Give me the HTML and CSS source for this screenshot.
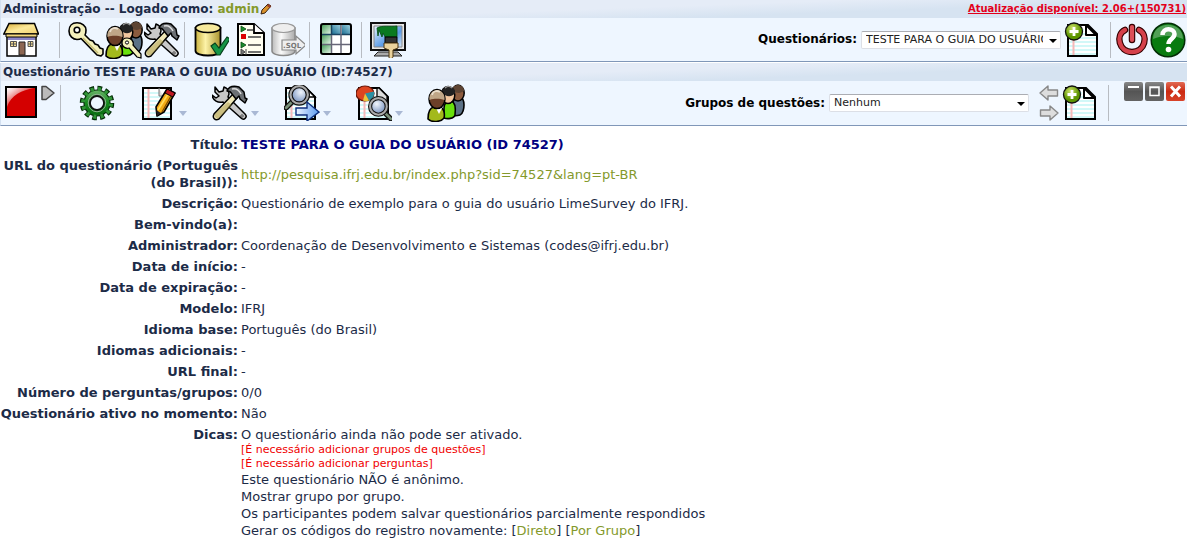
FILE: index.html
```
<!DOCTYPE html>
<html lang="pt-BR">
<head>
    <meta charset="UTF-8">
    <title>Administração - TESTE PARA O GUIA DO USUÁRIO</title>
    <link rel="stylesheet" href="styles.css">
</head>
<body>
    <svg class="sprite" width="0" height="0" aria-hidden="true">
        <defs>
            <linearGradient id="gold" x1="0" x2="1">
                <stop offset="0" stop-color="#c9b13c"/><stop offset=".4" stop-color="#fdf3a8"/><stop offset="1" stop-color="#a8922c"/>
            </linearGradient>
            <linearGradient id="silver" x1="0" x2="1">
                <stop offset="0" stop-color="#bbb"/><stop offset=".4" stop-color="#fafafa"/><stop offset="1" stop-color="#aaa"/>
            </linearGradient>
            <linearGradient id="roof" x1="0" x2="1" y1="0" y2="1">
                <stop offset="0" stop-color="#d8ac38"/><stop offset=".5" stop-color="#fbe99a"/><stop offset="1" stop-color="#f0cf6c"/>
            </linearGradient>
            <linearGradient id="red" x1="0" x2=".7" y1="0" y2=".7">
                <stop offset="0" stop-color="#fff"/><stop offset=".25" stop-color="#f6d0d0"/><stop offset="1" stop-color="#d40000"/>
            </linearGradient>
            <linearGradient id="green" x1="0" x2="0" y1="0" y2="1">
                <stop offset="0" stop-color="#6cb56c"/><stop offset=".5" stop-color="#158a1c"/><stop offset="1" stop-color="#0a6a12"/>
            </linearGradient>
            <linearGradient id="screen" x1="0" x2="1" y1="0" y2="1">
                <stop offset="0" stop-color="#e8f2fd"/><stop offset=".6" stop-color="#5a9be6"/><stop offset="1" stop-color="#d8e8fa"/>
            </linearGradient>
            <linearGradient id="cellTop" x1="0" x2="1" y1="1" y2="0">
                <stop offset="0" stop-color="#1c6f94"/><stop offset="1" stop-color="#9dd0de"/>
            </linearGradient>
            <linearGradient id="cellLeft" x1="0" x2="1" y1="0" y2="1">
                <stop offset="0" stop-color="#4ba05c"/><stop offset="1" stop-color="#e4f3e7"/>
            </linearGradient>
            <linearGradient id="grey" x1="0" x2="0" y1="0" y2="1">
                <stop offset="0" stop-color="#888"/><stop offset=".5" stop-color="#555"/><stop offset="1" stop-color="#636363"/>
            </linearGradient>
            <linearGradient id="closeRed" x1="0" x2="0" y1="0" y2="1">
                <stop offset="0" stop-color="#e26a54"/><stop offset=".5" stop-color="#cb2a12"/><stop offset="1" stop-color="#d8432a"/>
            </linearGradient>
            <linearGradient id="blue" x1="0" x2="1">
                <stop offset="0" stop-color="#eef5ff"/><stop offset="1" stop-color="#5b9bf0"/>
            </linearGradient>
            <radialGradient id="lens" cx=".4" cy=".35">
                <stop offset="0" stop-color="#f2f6fc"/><stop offset="1" stop-color="#8ea5cb"/>
            </radialGradient>
            <radialGradient id="plus" cx=".4" cy=".3">
                <stop offset="0" stop-color="#cfe36a"/><stop offset="1" stop-color="#5c9400"/>
            </radialGradient>
        </defs>

        <symbol id="i-home" viewBox="0 0 36 36">
            <path d="M4 14h29v20H4z" fill="#fff" stroke="#000" stroke-width="1.5"/>
            <path d="M5 14h27v4H5z" fill="#8a84c8"/>
            <path d="M6 1.5h25.500L35.500 12H.8z" fill="url(#roof)" stroke="#000" stroke-width="1.500"/>
            <path d="M3 12h31v3H3z" fill="#f3d67c" stroke="#000"/>
            <path d="M16 20h6v13h-6z" fill="#8c6652" stroke="#222"/>
            <path d="M7.500 19.500h6v5h-6zM25 19.500h5v5h-5z" fill="#f3dc92" stroke="#555"/>
            <path d="M10.500 19v6M7.500 22h6M27.500 19v6M25 22h5" stroke="#555"/>
        </symbol>

        <symbol id="i-key" viewBox="0 0 36 36">
            <path d="M9 .8C4 .8 1 4 1 9s4 8.500 8 8.500c2 0 3 0 4-1L29 33l4 1 2-2v-5l-3-1-2-3-3-1-2-3-3-1-5-5c1-2 1-3 1-5C18 4 14 .8 9 .8z" fill="#f4f0bb" stroke="#000" stroke-width="1.600" stroke-linejoin="round"/>
            <circle cx="9" cy="8" r="2.800" fill="#fff" stroke="#000" stroke-width="1.600"/>
            <path d="M15 16l15 15" stroke="#c5bc72" stroke-width="1.500"/>
        </symbol>

        <symbol id="i-users" viewBox="0 0 38 38">
            <path d="M25 22c0-7 5-9 8-9 3 1 4 5 4 8s-1 9-4 10c-3 1-7 1-8 0z" fill="#5b7186" stroke="#000" stroke-width="1.600"/>
            <ellipse cx="31" cy="9" rx="6.200" ry="8" fill="#8b5b3e" stroke="#000" stroke-width="1.500"/>
            <path d="M25 7c0-8 12-8 12 0-3 2-6 3-12 0z" fill="#5d4433"/>
            <path d="M17 24c0-5 4-8 7-7 4 1 5 6 4 14-1 4-8 4-11 3z" fill="#69e00c" stroke="#000" stroke-width="1.600"/>
            <ellipse cx="21" cy="11" rx="6.800" ry="8.500" fill="#f3c79f" stroke="#000" stroke-width="1.500"/>
            <path d="M14 12C13 0 29 0 28 9c-3 4-7 4-10 2-1 1-2 2-4 1z" fill="#222"/>
            <path d="M18 4c2-2 5-2 7 0" stroke="#999" stroke-width="1.500" fill="none"/>
            <path d="M1 35c0-6 1-11 6-12h6c4 1 5 7 4 11-3 4-12 5-16 1z" fill="#a3b91c" stroke="#000" stroke-width="1.600"/>
            <path d="M9 24l3 6 3-6z" fill="#fff"/>
            <ellipse cx="10" cy="15" rx="8" ry="9.500" fill="#6c3f28" stroke="#000" stroke-width="1.500"/>
            <path d="M2.500 16C1 3 19 3 17.500 16c-4-1-9-2-15 0z" fill="#bfa687"/>
            <path d="M5 11c1-4 5-5 8-3" stroke="#eadfce" stroke-width="1.800" fill="none"/>
        </symbol>

        <symbol id="i-users-key" viewBox="0 0 38 38">
            <use href="#i-users" width="38" height="38"/>
            <path d="M22 17c-4 0-5 3-5 5 0 4 4 6 7 5l8 9 4 1v-4l-8-9c1-4-2-7-6-7z" fill="#f4f0bb" stroke="#000" stroke-width="1.200"/>
            <circle cx="22" cy="21.500" r="1.600" fill="#fff" stroke="#000"/>
        </symbol>

        <symbol id="i-tools" viewBox="0 0 36 36">
            <path d="M3 2l4 5 4-1 1-4c3 1 5 3 5 7l-1 3 17 17c3 3-1 7-4 4L11 17c-5 1-10-1-11-7l4 3 3-2-4-4z" fill="#c8c8c8" stroke="#000" stroke-width="1.500" stroke-linejoin="round"/>
            <path d="M21 9l4 4L7 34c-4 2-7-1-5-5z" fill="#f0e8b8" stroke="#000" stroke-width="1.500"/>
            <path d="M16 17l4 3L7 33c-3 1-5-1-4-4z" fill="#9e8e3f" opacity=".45"/>
            <path d="M15 6c2-5 8-5 12-4l5 5 1 6 2 1-2 4-5-4-1-3-3 3-4-5c-1-2-3-3-5-3z" fill="#6c7074" stroke="#000" stroke-width="1.500" stroke-linejoin="round"/>
            <path d="M20 4c4-1 7 1 9 5" stroke="#ddd" stroke-width="1.500" fill="none"/>
            <circle cx="30" cy="31" r="1.200" fill="#fff" stroke="#000" stroke-width=".7"/>
        </symbol>

        <symbol id="i-database" viewBox="-1 0 36 36">
            <path d="M1.500 6v23c0 6 25 6 25 0V6z" fill="url(#gold)" stroke="#000" stroke-width="1.800"/>
            <ellipse cx="14" cy="6" rx="12.500" ry="4.500" fill="#f6e99b" stroke="#000" stroke-width="1.500"/>
            <path d="M17 24l4-3 4 5 8-11 3 2-10 16h-3z" fill="#159545" stroke="#06401b" stroke-width="1.200"/>
        </symbol>

        <symbol id="i-list" viewBox="-2 0 36 36">
            <path d="M5 2h16l10 9v22H5z" fill="#fffef0" stroke="#000" stroke-width="2"/>
            <path d="M21 2v9h10" fill="#fff" stroke="#000" stroke-width="1.800"/>
            <path d="M8 4l5 3-5 3zM8 20l5 3-5 3z" fill="#1a8a2a" stroke="#064a10" stroke-width=".8"/>
            <path d="M8 12h5v5H8z" fill="#d00"/>
            <path d="M8 27l4 3-4 3zM13 27v6" fill="#777" stroke="#444"/>
            <path d="M14 8h6M15 15h13M15 23h13M15 30h13" stroke="#444" stroke-width="1.500"/>
        </symbol>

        <symbol id="i-sql" viewBox="-1 0 36 36">
            <path d="M2 6v23c0 6 23 6 23 0V6z" fill="url(#silver)" stroke="#888" stroke-width="1.500"/>
            <ellipse cx="13.500" cy="6" rx="11.500" ry="4.500" fill="#eee" stroke="#999" stroke-width="1.200"/>
            <path d="M12 18h14v-4l10 9-10 9v-4H12z" fill="#eee" stroke="#888" stroke-width="1.200"/>
            <text x="13" y="26" class="sql-text">.SQL</text>
        </symbol>

        <symbol id="i-grid" viewBox="0 0 36 36">
            <rect x="3" y="2" width="30" height="30" rx="2" fill="#fff"/>
            <path d="M14 3h9v9h-9z" fill="url(#cellTop)"/>
            <path d="M24 3h8v9h-8z" fill="url(#cellTop)"/>
            <path d="M4 3h9v9H4z" fill="url(#cellLeft)"/>
            <path d="M4 13h9v9H4z" fill="url(#cellLeft)"/>
            <path d="M4 23h9v8H4z" fill="url(#cellLeft)"/>
            <path d="M4 12.500h28M13.500 3v9" stroke="#1a4460" stroke-width="1.500"/>
            <path d="M13.500 13v18M23 3v28M4 22.500h28" stroke="#667" stroke-width="1.500"/>
            <rect x="3" y="2" width="30" height="30" rx="2" fill="none" stroke="#000" stroke-width="2"/>
        </symbol>

        <symbol id="i-monitor" viewBox="0 0 36 36">
            <rect x="1" y="1" width="34" height="27" fill="#e8e8e8" stroke="#111" stroke-width="2"/>
            <path d="M4 4h28v21H4z" fill="url(#screen)" stroke="#888"/>
            <path d="M8 30l-4 4h28l-4-4z" fill="#aaa" stroke="#222"/>
            <path d="M7 6c5-3 13-1 20-2v11H15l-2-4-1 4-3-7-1 6z" fill="#0a7a20" stroke="#034a10" stroke-width=".8"/>
            <path d="M15 15h12v6H15z" fill="#333" stroke="#000"/>
            <path d="M14 21h14v5l-5 2v7c-1 2-4 2-4 0v-7l-5-2z" fill="#ead29c" stroke="#4a3510"/>
        </symbol>

        <symbol id="i-sheet" viewBox="0 0 36 36">
            <path d="M4 3h20l9 9v22H4z" fill="#fff" stroke="#000" stroke-width="2"/>
            <path d="M5 12h17M5 16h27M5 20h27M5 24h27M5 28h27M5 32h27M5 8h15" stroke="#c3f6f6" stroke-width="1.500"/>
            <path d="M9.500 4v29" stroke="#f5b9b9" stroke-width="2"/>
        </symbol>

        <symbol id="i-add" viewBox="0 0 36 36">
            <use href="#i-sheet" width="36" height="36"/>
            <path d="M22 3v10h10z" fill="#fff" stroke="#000" stroke-width="2" stroke-linejoin="round"/>
            <circle cx="10" cy="9.500" r="8.500" fill="url(#plus)" stroke="#111" stroke-width="1.300"/>
            <path d="M10 5v9M5.500 9.500h9" stroke="#fff" stroke-width="2.800"/>
        </symbol>

        <symbol id="i-power" viewBox="0 0 36 36">
            <path d="M11 8C1 13 5 30 18 30S35 13 25 8" fill="none" stroke="#300" stroke-width="6.500" stroke-linecap="round"/>
            <path d="M11 8C1 13 5 30 18 30S35 13 25 8" fill="none" stroke="#d5414b" stroke-width="4.200" stroke-linecap="round"/>
            <path d="M18 5v13" stroke="#300" stroke-width="6.500" stroke-linecap="round"/>
            <path d="M18 5v13" stroke="#dc4f58" stroke-width="4.200" stroke-linecap="round"/>
        </symbol>

        <symbol id="i-help" viewBox="0 0 36 36">
            <circle cx="18" cy="18" r="16.800" fill="#087b10" stroke="#032d06" stroke-width="1.500"/>
            <path d="M3 17C3-2 33-2 33 17c-9-4-21-4-30 0z" fill="#78b37c" opacity=".65"/>
            <path d="M12.500 13c0-8 12-7 12-1 0 5-6 5-6 10" fill="none" stroke="#fff" stroke-width="4.500"/>
            <circle cx="18.500" cy="27.500" r="2.800" fill="#fff"/>
        </symbol>

        <symbol id="i-stop" viewBox="0 0 36 36">
            <rect x="1" y="2" width="30" height="30" fill="#d40000" stroke="#000" stroke-width="2"/>
            <path d="M2 3h27C17 5 6 10 2 22z" fill="url(#red)"/>
        </symbol>

        <symbol id="i-play" viewBox="0 0 16 16">
            <path d="M2 1.500h4L14 8l-8 6.500H2z" fill="#bbb" stroke="#444" stroke-width="1.500" stroke-linejoin="round"/>
        </symbol>

        <symbol id="i-gear" viewBox="0 0 36 36">
            <circle cx="18" cy="18" r="15" fill="none" stroke="#052c08" stroke-width="4.500" stroke-dasharray="4.600 3.254"/>
            <circle cx="18" cy="18" r="13" fill="url(#green)" stroke="#052c08" stroke-width="1.200"/>
            <circle cx="18" cy="18" r="14" fill="none" stroke="#2f9436" stroke-width="4" stroke-dasharray="3 4.330" stroke-dashoffset="-.6"/>
            <circle cx="18" cy="18" r="7" fill="#eef6ff" stroke="#111" stroke-width="1.800"/>
            <circle cx="18" cy="18" r="8.800" fill="none" stroke="#8fb091" stroke-width="1"/>
        </symbol>

        <symbol id="i-edit" viewBox="0 0 36 36">
            <path d="M3 3h28v31H3z" fill="#fff" stroke="#000" stroke-width="2"/>
            <path d="M4 8h16M4 12h26M4 16h26M4 20h26M4 24h26M4 28h26M4 32h26" stroke="#c3f6f6" stroke-width="1.500"/>
            <path d="M8.500 4v29" stroke="#f5b9b9" stroke-width="2"/>
            <path d="M19 3v8h4" fill="#ddd" stroke="#777"/>
            <path d="M27 4l8 4-11 19-7 4-1-9z" fill="#f0ab14" stroke="#000" stroke-width="1.600" stroke-linejoin="round"/>
            <path d="M28 9L18 25" stroke="#ffdc5b" stroke-width="1.800"/>
            <path d="M31 11L22 27" stroke="#7c4a00" stroke-width="1.300"/>
            <path d="M27 4l8 4-2 4-8-4z" fill="#bf1620" stroke="#000"/>
            <path d="M17 31l-1-6 5 3z" fill="#222"/>
        </symbol>

        <symbol id="i-magnifier" viewBox="0 0 24 24">
            <path d="M15 15l7 7" stroke="#111" stroke-width="5" stroke-linecap="round"/>
            <path d="M15 15l7 7" stroke="#799179" stroke-width="2.600" stroke-linecap="round"/>
            <circle cx="10" cy="10" r="8" fill="url(#lens)" stroke="#111" stroke-width="4"/>
            <circle cx="10" cy="10" r="8" fill="none" stroke="#aaa" stroke-width="2"/>
        </symbol>

        <symbol id="i-export" viewBox="0 0 36 36">
            <use href="#i-sheet" x="-2" width="36" height="36"/>
            <path d="M22 3l9 9h-9z" fill="#fff" stroke="#000" stroke-width="1.500"/>
            <g transform="translate(26 -1) scale(-1 1)">
                <use href="#i-magnifier" width="26" height="26"/>
            </g>
            <path d="M12 23h11v-6l12 10-12 9v-6H12z" fill="url(#blue)" stroke="#0d2f7c" stroke-width="1.400"/>
        </symbol>

        <symbol id="i-stats" viewBox="0 0 36 36">
            <use href="#i-sheet" x="-1" width="36" height="36"/>
            <path d="M21 3h2l8 8v5l-10-3z" fill="#ddd" stroke="#000" stroke-width="1.300"/>
            <ellipse cx="9" cy="8.500" rx="9" ry="7.500" fill="#dc4420" stroke="#6c1608" stroke-width="1.200"/>
            <path d="M9 8.500l9-2c1 4-2 8-5 9z" fill="#2c90a3"/>
            <path d="M9 8.500l4 7c-2 1-4 1-6 0z" fill="#e8c63a"/>
            <use href="#i-magnifier" x="12" y="11" width="25" height="25"/>
        </symbol>

        <symbol id="i-arrow" viewBox="0 0 20 16">
            <path d="M1 8l8-7v4h9.500v6H9v4z" fill="#ddd" stroke="#888" stroke-width="1.400" stroke-linejoin="round"/>
        </symbol>

        <symbol id="i-minimize" viewBox="0 0 19 19">
            <rect width="19" height="19" rx="2" fill="url(#grey)"/>
            <path d="M4 5h11" stroke="#fff" stroke-width="2"/>
        </symbol>
        <symbol id="i-maximize" viewBox="0 0 19 19">
            <rect width="19" height="19" rx="2" fill="url(#grey)"/>
            <path d="M5 5h9v8.500H5zM5 5.500h9" fill="none" stroke="#fff" stroke-width="1.500"/>
        </symbol>
        <symbol id="i-close" viewBox="0 0 19 19">
            <rect width="19" height="19" rx="2" fill="url(#closeRed)"/>
            <path d="M5 4.500l9 10M14 4.500l-9 10" stroke="#fff" stroke-width="3"/>
        </symbol>

        <symbol id="i-pencil" viewBox="0 0 12 12">
            <path d="M8 1l3 2-6 7-4 1 1-4z" fill="#d9912a" stroke="#3a2210"/>
            <path d="M8 1l3 2-1 2-3-2z" fill="#963c28"/>
        </symbol>
    </svg>

    <!-- Barra de administração -->
    <div class="menubar">
        <div class="menubar-title">
            <strong>Administração -- Logado como: <a href="#">admin<svg class="icon-pencil"><use href="#i-pencil"/></svg></a></strong>
            <a class="update" href="#">Atualização disponível: 2.06+(150731)</a>
        </div>
        <div class="menubar-main">
            <div class="tools tools-home">
                <button type="button" aria-label="Início"><svg><use href="#i-home"/></svg></button>
            </div>
            <span class="separator"></span>
            <div class="tools">
                <button type="button" aria-label="Administradores"><svg><use href="#i-key"/></svg></button>
                <button type="button" aria-label="Grupos de usuários"><svg class="icon-users"><use href="#i-users-key"/></svg></button>
                <button type="button" aria-label="Configurações"><svg><use href="#i-tools"/></svg></button>
            </div>
            <span class="separator"></span>
            <div class="tools">
                <button type="button" aria-label="Verificar dados"><svg><use href="#i-database"/></svg></button>
                <button type="button" aria-label="Listar questionários"><svg><use href="#i-list"/></svg></button>
                <button type="button" aria-label="Backup"><svg><use href="#i-sql"/></svg></button>
            </div>
            <span class="separator"></span>
            <div class="tools">
                <button type="button" aria-label="Conjuntos de rótulos"><svg><use href="#i-grid"/></svg></button>
            </div>
            <span class="separator separator-wide"></span>
            <div class="tools">
                <button type="button" aria-label="Modelos"><svg><use href="#i-monitor"/></svg></button>
            </div>

            <div class="menubar-right">
                <label for="surveylist">Questionários:</label>
                <span class="select">
                    <select id="surveylist">
                        <option>TESTE PARA O GUIA DO USUÁRIO (ID 74527)</option>
                    </select>
                </span>
                <button type="button" aria-label="Novo questionário"><svg><use href="#i-add"/></svg></button>
                <span class="separator separator-right"></span>
                <button type="button" aria-label="Sair"><svg><use href="#i-power"/></svg></button>
                <button type="button" aria-label="Ajuda"><svg><use href="#i-help"/></svg></button>
            </div>
        </div>
    </div>

    <!-- Barra do questionário -->
    <div class="menubar">
        <div class="menubar-title">
            <strong>Questionário TESTE PARA O GUIA DO USUÁRIO (ID:74527)</strong>
        </div>
        <div class="menubar-main survey-main">
            <div class="tools">
                <button type="button" aria-label="Inativo"><svg><use href="#i-stop"/></svg></button>
                <button type="button" class="play" aria-label="Ativar"><svg><use href="#i-play"/></svg></button>
            </div>
            <span class="separator"></span>
            <div class="tools tools-survey">
                <button type="button" aria-label="Executar"><svg><use href="#i-gear"/></svg></button>
                <button type="button" class="dropdown" aria-label="Propriedades"><svg><use href="#i-edit"/></svg></button>
                <button type="button" class="dropdown" aria-label="Ferramentas"><svg><use href="#i-tools"/></svg></button>
                <button type="button" class="dropdown" aria-label="Exportar"><svg><use href="#i-export"/></svg></button>
                <button type="button" class="dropdown" aria-label="Respostas"><svg><use href="#i-stats"/></svg></button>
                <button type="button" aria-label="Participantes"><svg class="icon-users"><use href="#i-users"/></svg></button>
            </div>

            <div class="menubar-right">
                <label for="groupselect">Grupos de questões:</label>
                <span class="select">
                    <select id="groupselect">
                        <option>Nenhum</option>
                    </select>
                </span>
                <span class="arrows">
                    <button type="button" aria-label="Grupo anterior"><svg><use href="#i-arrow"/></svg></button>
                    <button type="button" class="next" aria-label="Próximo grupo"><svg><use href="#i-arrow"/></svg></button>
                </span>
                <button type="button" aria-label="Novo grupo"><svg><use href="#i-add"/></svg></button>
                <span class="separator separator-right"></span>
                <span class="window-buttons">
                    <button type="button" aria-label="Minimizar"><svg><use href="#i-minimize"/></svg></button>
                    <button type="button" aria-label="Maximizar"><svg><use href="#i-maximize"/></svg></button>
                    <button type="button" aria-label="Fechar"><svg><use href="#i-close"/></svg></button>
                </span>
            </div>
        </div>
    </div>

    <table class="details">
        <tr><th scope="row">Título:</th><td class="survey-title">TESTE PARA O GUIA DO USUÁRIO (ID 74527)</td></tr>
        <tr><th scope="row">URL do questionário (Português (do Brasil)):</th><td><a href="#">http://pesquisa.ifrj.edu.br/index.php?sid=74527&amp;lang=pt-BR</a></td></tr>
        <tr><th scope="row">Descrição:</th><td>Questionário de exemplo para o guia do usuário LimeSurvey do IFRJ.</td></tr>
        <tr><th scope="row">Bem-vindo(a):</th><td></td></tr>
        <tr><th scope="row">Administrador:</th><td>Coordenação de Desenvolvimento e Sistemas (codes@ifrj.edu.br)</td></tr>
        <tr><th scope="row">Data de início:</th><td>-</td></tr>
        <tr><th scope="row">Data de expiração:</th><td>-</td></tr>
        <tr><th scope="row">Modelo:</th><td>IFRJ</td></tr>
        <tr><th scope="row">Idioma base:</th><td>Português (do Brasil)</td></tr>
        <tr><th scope="row">Idiomas adicionais:</th><td>-</td></tr>
        <tr><th scope="row">URL final:</th><td>-</td></tr>
        <tr><th scope="row">Número de perguntas/grupos:</th><td>0/0</td></tr>
        <tr><th scope="row">Questionário ativo no momento:</th><td>Não</td></tr>
        <tr class="hints">
            <th scope="row">Dicas:</th>
            <td>
                O questionário ainda não pode ser ativado.
                <div class="warning">[É necessário adicionar grupos de questões]</div>
                <div class="warning">[É necessário adicionar perguntas]</div>
                Este questionário NÃO é anônimo.<br>
                Mostrar grupo por grupo.<br>
                Os participantes podem salvar questionários parcialmente respondidos<br>
                Gerar os códigos do registro novamente: [<a href="#">Direto</a>] [<a href="#">Por Grupo</a>]
            </td>
        </tr>
    </table>
</body>
</html>
```
FILE: styles.css
```
body {
    margin: 0;
    background: #fff;
    color: #1c2b47;
    font: 13px/17px Verdana, "DejaVu Sans", sans-serif;
}

a {
    color: #84992b;
    text-decoration: none;
}

button {
    flex: none;
    padding: 0;
    border: 0;
    background: none;
    cursor: pointer;
}

svg {
    display: block;
    width: 36px;
    height: 36px;
    overflow: visible;
}

.sprite {
    position: absolute;
    width: 0;
    height: 0;
}

.sql-text {
    font: bold 7px "DejaVu Sans", sans-serif;
    fill: #777;
}

/* Barras de menu */
.menubar {
    margin-bottom: 1px;
    border-bottom: 1px solid #8097b8;
    border-left: 1px solid #d3e0f0;
    background: #eef6ff;
}

.menubar-title {
    display: flex;
    justify-content: space-between;
    height: 18px;
    padding: 0 1px 0 2px;
    background: linear-gradient(178deg, #e5ecf7 50%, #d6e3f1 70%);
    font-size: 12px;
    line-height: 18px;
}

.icon-pencil {
    display: inline-block;
    width: 12px;
    height: 12px;
    margin-left: 1px;
    vertical-align: -2px;
}

.update {
    color: #e3001b;
    font-size: 10px;
    font-weight: bold;
    text-decoration: underline;
}

.menubar-main {
    display: flex;
    align-items: center;
    height: 43px;
    padding: 0 1px 0 2px;
}

.survey-main {
    height: 44px;
    padding-left: 4px;
}

.tools {
    display: flex;
    align-items: flex-start;
    gap: 2px;
}

.tools-home {
    padding-right: 16px;
}

.tools-survey {
    gap: 25px;
    padding-left: 10px;
}

.icon-users {
    width: 38px;
    height: 38px;
    margin: -1px;
}

.play {
    margin-left: -3px;
}

.play svg {
    width: 16px;
    height: 16px;
}

.dropdown {
    display: flex;
    align-items: center;
    gap: 3px;
}

.dropdown::after {
    content: "";
    margin-top: 20px;
    border: 4px solid transparent;
    border-top: 5px solid #a9b8d4;
    border-bottom: 0;
}

.separator {
    width: 1px;
    height: 36px;
    margin: 0 8px 0 4px;
    background: #b8bcc2;
}

.separator-wide {
    margin-left: 7px;
}

.separator-right {
    margin: 0 3px 0 10px;
}

.menubar-right {
    display: flex;
    align-items: center;
    align-self: stretch;
    margin-left: auto;
    color: #000;
    font-size: 12px;
    font-weight: bold;
}

.select {
    position: relative;
    margin: 0 3px 0 4px;
}

.select::after {
    content: "";
    position: absolute;
    top: 8px;
    right: 4px;
    border: 4px solid transparent;
    border-top-color: #000;
    border-bottom: 0;
    pointer-events: none;
}

.select select {
    display: block;
    width: 200px;
    height: 18px;
    padding: 0 17px 0 4px;
    border: 1px solid #dcdfe6;
    border-top-color: #abadb3;
    border-radius: 2px;
    background: #fff;
    color: #222;
    font: 11px/16px Verdana, "DejaVu Sans", sans-serif;
    appearance: none;
}

.arrows {
    display: flex;
    flex-direction: column;
    gap: 4px;
    margin: 0 3px 0 7px;
}

.arrows svg {
    width: 20px;
    height: 16px;
}

.next {
    transform: scaleX(-1);
}

.window-buttons {
    display: flex;
    align-self: flex-start;
    gap: 2px;
    margin: 1px 1px 0 12px;
}

.window-buttons svg {
    width: 19px;
    height: 19px;
}

/* Resumo do questionário */
.details {
    width: 100%;
    margin-top: 8px;
    border-collapse: collapse;
}

.details th,
.details td {
    height: 17px;
    padding: 2px;
    vertical-align: middle;
}

.details th {
    width: 238px;
    padding: 2px 1px 2px 0;
    text-align: right;
}

.details .survey-title {
    color: #000080;
    font-weight: bold;
}

.details .hints th,
.details .hints td {
    vertical-align: top;
}

.warning {
    color: #f00000;
    font-size: 11px;
    line-height: 14px;
}
```
